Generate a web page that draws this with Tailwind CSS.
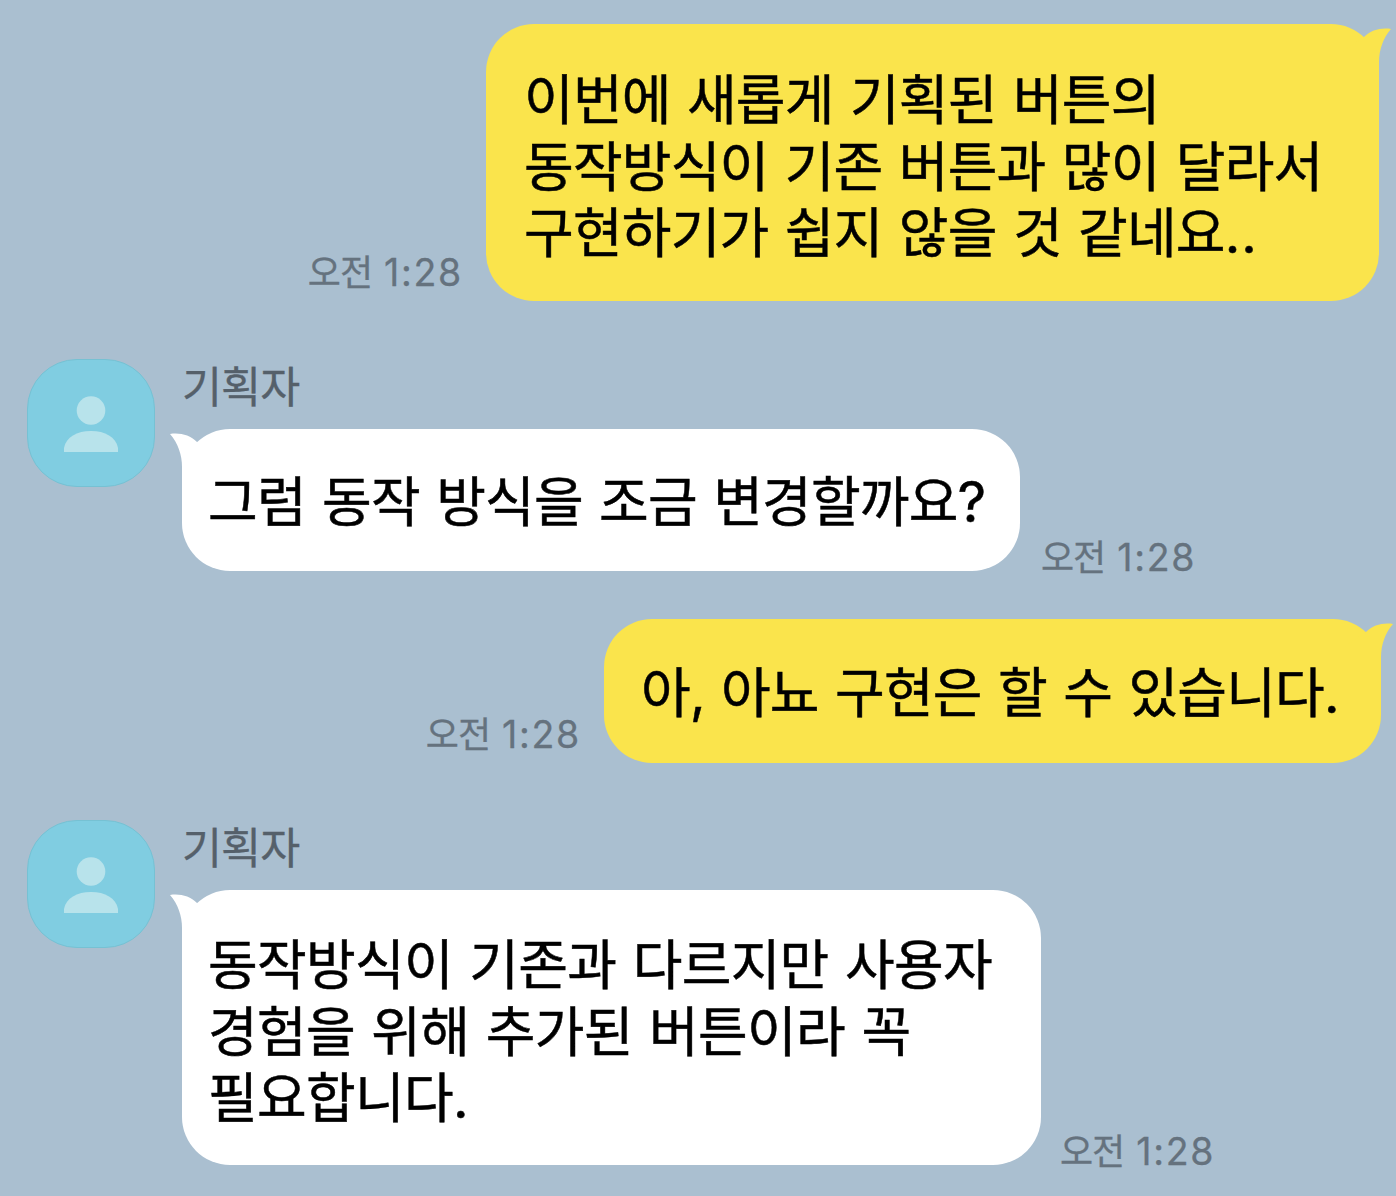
<!DOCTYPE html>
<html lang="ko">
  <head>
    <meta charset="UTF-8" />
    <script src="https://cdn.jsdelivr.net/npm/@tailwindcss/browser@4"></script>
    <title>채팅</title>
  </head>
  <body class="bg-[#aabfd0] font-['Noto_Sans_CJK_KR',sans-serif] text-black">
    <main class="w-[1396px] h-[1196px] overflow-hidden pt-[24px]">

      <!-- me -->
      <div class="flex items-end justify-end pr-[17px]">
        <time class="mr-[23px] mb-[6px] text-[36px] leading-[44px] tracking-[-1px] text-[#65727e] whitespace-nowrap [-webkit-text-stroke:0.3px]">오전<span class="ml-[12px] font-['Inter'] text-[37.5px] tracking-[1.7px]">1:28</span></time>
        <div class="relative w-[893px] h-[277px] rounded-[48px] bg-[#fae44c] pt-[40px] pl-[38px] text-[54px] leading-[66.7px] tracking-[-0.8px] [word-spacing:2px] whitespace-nowrap [-webkit-text-stroke:0.5px]">
          <svg class="absolute top-0 -right-[12px] w-[52px] h-[50px]" viewBox="0 0 52 50" fill="#fae44c"><path d="M25 13C32 6 42 3.500 52 5C44 14 40 26 40 38V50H0V30Z" /></svg>
          <p>이번에 새롭게 기획된 버튼의<br />동작방식이 기존 버튼과 많이 달라서<br />구현하기가 쉽지 않을 것 같네요<span class="font-['Inter'] tracking-[1px]">..</span></p>
        </div>
      </div>

      <!-- planner -->
      <div class="flex items-start mt-[58px] pl-[26.5px]">
        <div class="w-[128px] h-[128px] rounded-[50px] bg-[#80cde1] border border-[#76c1d3] flex justify-center">
          <svg class="mt-[35px] w-[54px] h-[58px]" viewBox="0 0 54 58" fill="#b8e3eb"><circle cx="27" cy="15.500" r="14.300" /><path d="M0 57V53C2 42 13 36 27 36S52 42 54 53V57Z" /></svg>
        </div>
        <div class="ml-[27.5px]">
          <p class="h-[70px] text-[43.5px] leading-[51px] tracking-[-0.9px] text-[#55606a] [-webkit-text-stroke:0.3px]">기획자</p>
          <div class="flex items-end">
            <div class="relative w-[838px] h-[142px] rounded-[48px] bg-white pt-[37px] pl-[26px] text-[54px] leading-[66.7px] tracking-[-0.8px] [word-spacing:2px] whitespace-nowrap [-webkit-text-stroke:0.5px]">
              <svg class="absolute top-0 -left-[12px] w-[52px] h-[50px]" viewBox="0 0 52 50" fill="#fff"><path d="M27 13C20 6 10 3.500 0 5C8 14 12 26 12 38V50H52V30Z" /></svg>
              <p>그럼 동작 방식을 조금 변경할까요<span class="font-['Inter'] text-[56px]">?</span></p>
            </div>
            <time class="ml-[21px] -mb-[9px] text-[36px] leading-[44px] tracking-[-1px] text-[#65727e] whitespace-nowrap [-webkit-text-stroke:0.3px]">오전<span class="ml-[12px] font-['Inter'] text-[37.5px] tracking-[1.7px]">1:28</span></time>
          </div>
        </div>
      </div>

      <!-- me -->
      <div class="flex items-end justify-end mt-[48px] pr-[15px]">
        <time class="mr-[23px] mb-[6px] text-[36px] leading-[44px] tracking-[-1px] text-[#65727e] whitespace-nowrap [-webkit-text-stroke:0.3px]">오전<span class="ml-[12px] font-['Inter'] text-[37.5px] tracking-[1.7px]">1:28</span></time>
        <div class="relative w-[777px] h-[144px] rounded-[48px] bg-[#fae44c] pt-[38px] pl-[37px] text-[54px] leading-[66.7px] tracking-[-0.8px] [word-spacing:2px] whitespace-nowrap [-webkit-text-stroke:0.5px]">
          <svg class="absolute top-0 -right-[12px] w-[52px] h-[50px]" viewBox="0 0 52 50" fill="#fae44c"><path d="M25 13C32 6 42 3.500 52 5C44 14 40 26 40 38V50H0V30Z" /></svg>
          <p>아<span class="font-['Inter']">,</span> 아뇨 구현은 할 수 있습니다<span class="font-['Inter']">.</span></p>
        </div>
      </div>

      <!-- planner -->
      <div class="flex items-start mt-[57px] pl-[26.5px]">
        <div class="w-[128px] h-[128px] rounded-[50px] bg-[#80cde1] border border-[#76c1d3] flex justify-center">
          <svg class="mt-[35px] w-[54px] h-[58px]" viewBox="0 0 54 58" fill="#b8e3eb"><circle cx="27" cy="15.500" r="14.300" /><path d="M0 57V53C2 42 13 36 27 36S52 42 54 53V57Z" /></svg>
        </div>
        <div class="ml-[27.5px]">
          <p class="h-[70px] text-[43.5px] leading-[51px] tracking-[-0.9px] text-[#55606a] [-webkit-text-stroke:0.3px]">기획자</p>
          <div class="flex items-end">
            <div class="relative w-[859px] h-[275px] rounded-[48px] bg-white pt-[39px] pl-[26px] text-[54px] leading-[66.7px] tracking-[-0.7px] [word-spacing:2px] whitespace-nowrap [-webkit-text-stroke:0.5px]">
              <svg class="absolute top-0 -left-[12px] w-[52px] h-[50px]" viewBox="0 0 52 50" fill="#fff"><path d="M27 13C20 6 10 3.500 0 5C8 14 12 26 12 38V50H52V30Z" /></svg>
              <p>동작방식이 기존과 다르지만 사용자<br />경험을 위해 추가된 버튼이라 꼭<br />필요합니다<span class="font-['Inter']">.</span></p>
            </div>
            <time class="ml-[19px] -mb-[9px] text-[36px] leading-[44px] tracking-[-1px] text-[#65727e] whitespace-nowrap [-webkit-text-stroke:0.3px]">오전<span class="ml-[12px] font-['Inter'] text-[37.5px] tracking-[1.7px]">1:28</span></time>
          </div>
        </div>
      </div>

    </main>
  </body>
</html>
